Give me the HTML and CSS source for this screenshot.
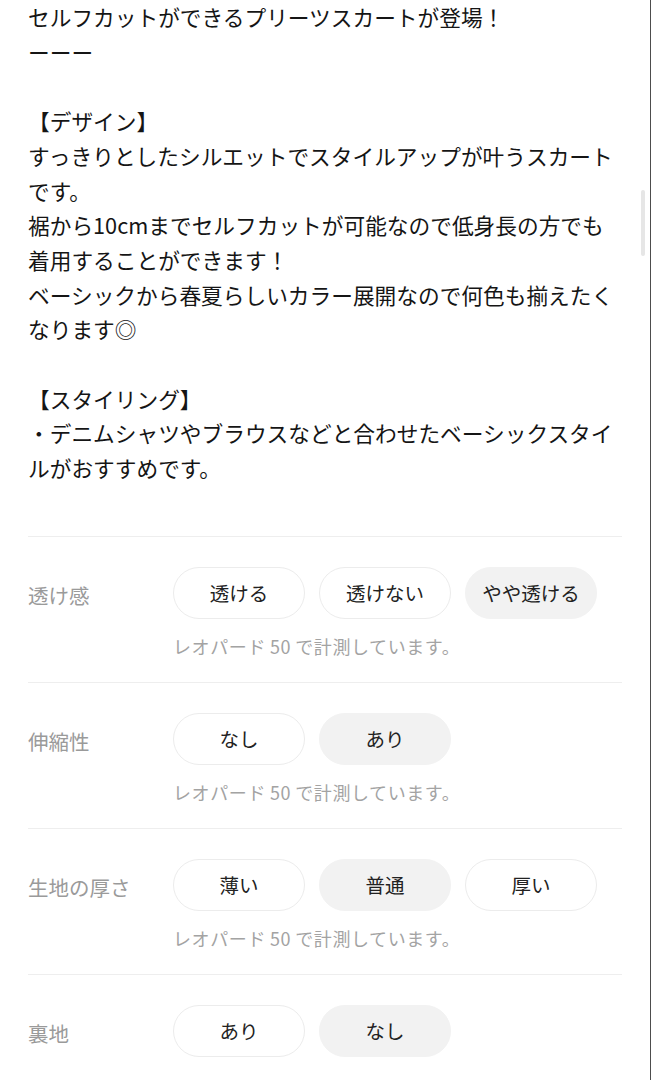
FILE: index.html
```html
<!DOCTYPE html>
<html lang="ja">
<head>
<meta charset="utf-8">
<title>商品説明</title>
<link rel="stylesheet" href="styles.css">
</head>
<body>
<div class="page">
  <div class="desc">
    <p>セルフカットができるプリーツスカートが登場！<br>ーーー<br><br>【デザイン】<br>すっきりとしたシルエットでスタイルアップが叶うスカート<br>です。<br>裾から10cmまでセルフカットが可能なので低身長の方でも<br>着用することができます！<br>ベーシックから春夏らしいカラー展開なので何色も揃えたく<br>なります◎<br><br>【スタイリング】<br>・デニムシャツやブラウスなどと合わせたベーシックスタイ<br>ルがおすすめです。</p>
  </div>

  <section class="spec">
    <div class="spec-main">
      <div class="spec-label">透け感</div>
      <div class="chips">
        <span class="chip">透ける</span>
        <span class="chip">透けない</span>
        <span class="chip chip-on">やや透ける</span>
      </div>
    </div>
    <p class="spec-note">レオパード<span class="num">50</span>で計測しています。</p>
  </section>

  <section class="spec">
    <div class="spec-main">
      <div class="spec-label">伸縮性</div>
      <div class="chips">
        <span class="chip">なし</span>
        <span class="chip chip-on">あり</span>
      </div>
    </div>
    <p class="spec-note">レオパード<span class="num">50</span>で計測しています。</p>
  </section>

  <section class="spec">
    <div class="spec-main">
      <div class="spec-label">生地の厚さ</div>
      <div class="chips">
        <span class="chip">薄い</span>
        <span class="chip chip-on">普通</span>
        <span class="chip">厚い</span>
      </div>
    </div>
    <p class="spec-note">レオパード<span class="num">50</span>で計測しています。</p>
  </section>

  <section class="spec">
    <div class="spec-main">
      <div class="spec-label">裏地</div>
      <div class="chips">
        <span class="chip">あり</span>
        <span class="chip chip-on">なし</span>
      </div>
    </div>
  </section>

  <div class="scroll-thumb"></div>
</div>
</body>
</html>
```

FILE: styles.css
```css
html, body {
  margin: 0;
  padding: 0;
  background: #ffffff;
}

body {
  font-family: "Noto Sans CJK JP", "Noto Sans", sans-serif;
  color: #1c1c1c;
}

.page {
  position: relative;
  width: 651px;
  min-height: 1080px;
  border-right: 1px solid #4d4d4d;
  padding: 0 28px 0 28px;
  box-sizing: border-box;
  overflow: hidden;
}

.desc p {
  margin: 0;
  font-size: 21.7px;
  line-height: 34.7px;
  white-space: nowrap;
  color: #151515;
  padding-bottom: 50px;
}

.spec {
  border-top: 1px solid #eeeeee;
  padding: 30px 0 24px;
}

.spec-main {
  display: flex;
  align-items: center;
}

.spec-label {
  width: 145px;
  flex: none;
  font-size: 20.5px;
  color: #9a9a9a;
  padding-top: 5px;
}

.chips {
  display: flex;
  gap: 14px;
}

.chip {
  width: 132px;
  height: 52px;
  box-sizing: border-box;
  border: 1px solid #ececec;
  border-radius: 26px;
  background: #ffffff;
  display: flex;
  align-items: center;
  justify-content: center;
  font-size: 19.5px;
  color: #222222;
}

.chip-on {
  background: #f2f2f2;
  border-color: #f2f2f2;
}

.spec-note {
  margin: 15px 0 0 145px;
  font-size: 18px;
  line-height: 24px;
  letter-spacing: 0.6px;
  color: #a3a3a3;
}

.spec-note .num {
  margin: 0 4px;
}

.scroll-thumb {
  position: absolute;
  left: 641px;
  top: 190px;
  width: 4px;
  height: 66px;
  border-radius: 2px;
  background: #e6e6e6;
}
```
